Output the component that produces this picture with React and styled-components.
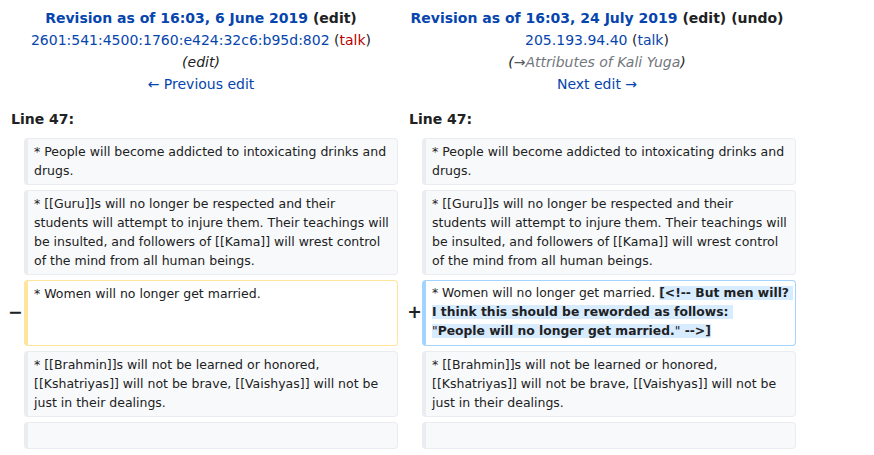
import React from 'react';
import styled, { createGlobalStyle } from 'styled-components';

const GlobalStyle = createGlobalStyle`
  body {
    margin: 0;
    background: #ffffff;
    font-family: 'DejaVu Sans', sans-serif;
    color: #202122;
  }
`;

const DiffGrid = styled.div`
  display: grid;
  grid-template-columns: 16px 374px 24px 374px;
  row-gap: 5px;
  padding: 7px 0 0 8px;
`;

const TitleCell = styled.div`
  grid-column: span 2;
  text-align: center;
  font-size: 14px;
  line-height: 22px;
  padding-right: ${(p) => p.$shift}px;
`;

const TitleRow = styled.div`
  white-space: nowrap;
`;

const Strong = styled.span`
  font-weight: bold;
`;

const Link = styled.span`
  color: ${(p) => (p.$red ? '#ba0000' : '#0645ad')};
`;

const Comment = styled.span`
  font-style: italic;
  color: ${(p) => (p.$muted ? '#72777d' : '#202122')};
`;

const Arrow = styled.span`
  color: #54595d;
`;

const LineNo = styled.div`
  grid-column: span 2;
  font-size: 14px;
  font-weight: bold;
  line-height: 22px;
  padding: 8px 0 3px ${(p) => p.$indent}px;
`;

const Marker = styled.div`
  font-size: 17.5px;
  font-weight: bold;
  line-height: 1.2;
  text-align: right;
  padding-right: ${(p) => p.$pad}px;
  align-self: center;
  white-space: nowrap;
`;

const borders = {
  context: '#eaecf0',
  deleted: '#ffe49c',
  added: '#a3d3ff',
};

const Line = styled.div`
  font-size: ${(p) => (p.$kind === 'added' ? '12.32px' : '12.5px')};
  line-height: 19.3px;
  padding: 3px 6px;
  border-style: solid;
  border-width: 1px 1px 1px 4px;
  border-radius: 4px;
  border-color: ${(p) => borders[p.$kind]};
  background: ${(p) => (p.$kind === 'context' ? '#f8f9fa' : '#ffffff')};
  white-space: pre-wrap;
  word-wrap: break-word;
  min-height: 19.3px;
`;

const Change = styled.span`
  font-weight: bold;
  background: #d8ecff;
`;

const Quote = styled.span`
  font-weight: normal;
`;

const contextRows = [
  '* People will become addicted to intoxicating drinks and drugs.',
  '* [[Guru]]s will no longer be respected and their students will attempt to injure them. Their teachings will be insulted, and followers of [[Kama]] will wrest control of the mind from all human beings.',
];

const afterRows = [
  '* [[Brahmin]]s will not be learned or honored, [[Kshatriyas]] will not be brave, [[Vaishyas]] will not be just in their dealings.',
  '',
];

const ContextRow = ({ text }) => (
  <>
    <Marker $pad={3} />
    <Line $kind="context">{text}</Line>
    <Marker $pad={0} />
    <Line $kind="context">{text}</Line>
  </>
);

export default function App() {
  return (
    <>
      <GlobalStyle />
      <DiffGrid>
        <TitleCell $shift={4}>
          <TitleRow>
            <Strong>
              <Link>Revision as of 16:03, 6 June 2019</Link> (edit)
            </Strong>
          </TitleRow>
          <TitleRow>
            <Link>2601:541:4500:1760:e424:32c6:b95d:802</Link> (<Link $red>talk</Link>)
          </TitleRow>
          <TitleRow>
            <Comment>(edit)</Comment>
          </TitleRow>
          <TitleRow>
            <Link>← Previous edit</Link>
          </TitleRow>
        </TitleCell>
        <TitleCell $shift={0}>
          <TitleRow>
            <Strong>
              <Link>Revision as of 16:03, 24 July 2019</Link> (edit) (undo)
            </Strong>
          </TitleRow>
          <TitleRow>
            <Link>205.193.94.40</Link> (<Link>talk</Link>)
          </TitleRow>
          <TitleRow>
            <Comment>
              (<Arrow>→</Arrow>
              <Comment $muted>Attributes of Kali Yuga</Comment>)
            </Comment>
          </TitleRow>
          <TitleRow>
            <Link>Next edit →</Link>
          </TitleRow>
        </TitleCell>

        <LineNo $indent={3}>Line 47:</LineNo>
        <LineNo $indent={11}>Line 47:</LineNo>

        {contextRows.map((t, i) => (
          <ContextRow key={'a' + i} text={t} />
        ))}

        <Marker $pad={3}>−</Marker>
        <Line $kind="deleted">* Women will no longer get married.</Line>
        <Marker $pad={0}>+</Marker>
        <Line $kind="added">
          * Women will no longer get married.{' '}
          <Change>
            {'[<!-- But men will? I think this should be reworded as follows: \n'}
            <Quote>"</Quote>People will no longer get married.<Quote>"</Quote> --&gt;]
          </Change>
        </Line>

        {afterRows.map((t, i) => (
          <ContextRow key={'b' + i} text={t} />
        ))}
      </DiffGrid>
    </>
  );
}
